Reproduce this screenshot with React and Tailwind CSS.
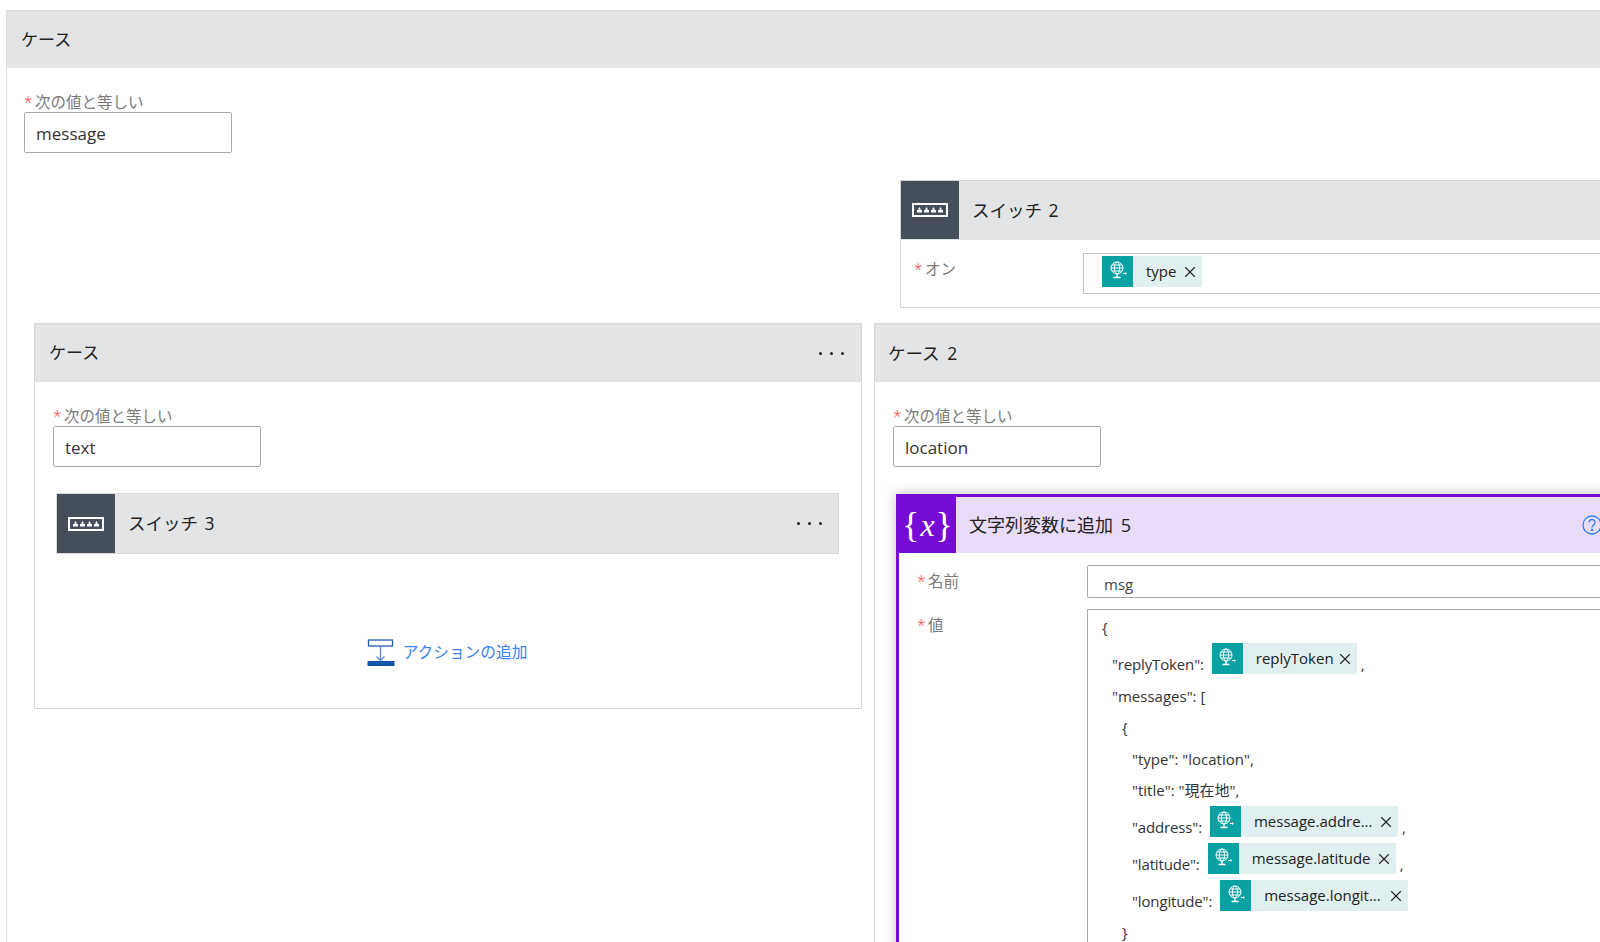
import { X } from "lucide-react";

function Globe() {
  return (
    <svg width="20" height="20" viewBox="0 0 20 20" fill="none" stroke="white" strokeWidth="1">
      <circle cx="9" cy="8" r="6" />
      <ellipse cx="9" cy="8" rx="2.6" ry="6" />
      <path d="M3 8h12M4 5h10M4 11h10" />
      <path d="M9 14v3M5.5 17.5h7" strokeWidth="1.4" />
      <path d="M15 13.5h3.5M17.2 12.5l1.3 1-1.3 1" />
    </svg>
  );
}

function SwitchIcon() {
  return (
    <svg width="36" height="14" viewBox="0 0 36 14" fill="none">
      <rect x="1" y="1" width="34" height="12" stroke="white" strokeWidth="2" fill="none" />
      {[5, 12, 19, 26].map((x) => (
        <path key={x} d="M1.5 3.5l1-1.5h0l1 1.5v1.5h1.5v2.5h-5v-2.5h1.5z" transform={`translate(${x} 2)`} fill="white" />
      ))}
    </svg>
  );
}

function Dots() {
  return (
    <div className="flex gap-[8px]">
      <span className="w-[3px] h-[3px] rounded-full bg-[#222]" />
      <span className="w-[3px] h-[3px] rounded-full bg-[#222]" />
      <span className="w-[3px] h-[3px] rounded-full bg-[#222]" />
    </div>
  );
}

function Token({ label, width }) {
  return (
    <div className={`flex h-[31px] shrink-0 bg-[#e0f0f0] ${width}`}>
      <div className="w-[31px] h-[31px] shrink-0 bg-[#0aa1a3] flex items-center justify-center pb-[3px]">
        <Globe />
      </div>
      <span className="ml-[13px] text-[15px] leading-[31px] text-[#222] whitespace-nowrap">{label}</span>
      <X size={18} strokeWidth={1.5} className="ml-auto mr-[3px] mt-[7px] text-[#222]" />
    </div>
  );
}

function Label({ children, className = "" }) {
  return (
    <div className={`flex text-[15.5px] leading-[20px] text-[#7a7a7a] ${className}`}>
      <span className="text-[#f33] w-[11px] shrink-0 font-light">*</span>
      {children}
    </div>
  );
}

function EqualsField({ value }) {
  return (
    <div>
      <Label>次の値と等しい</Label>
      <div className="w-[208px] h-[41px] border border-[#aaaaaa] rounded-[2px] bg-white px-[11px] text-[17px] leading-[41px] text-[#333]">
        {value}
      </div>
    </div>
  );
}

function CodeLine({ indent, text, token, tokenWidth, trail, height = "h-[31px]" }) {
  if (!token) {
    return <div className={`leading-[31px] whitespace-nowrap ${height} ${indent}`}>{text}</div>;
  }
  return (
    <div className={`flex whitespace-nowrap ${height} ${indent}`}>
      <span className="leading-[31px] mt-[6px] mr-[8px] tracking-[-0.01em]">{text}</span>
      <Token label={token} width={tokenWidth} />
      {trail && <span className="leading-[31px] mt-[6px] ml-[4px]">{trail}</span>}
    </div>
  );
}

export default function App() {
  return (
    <div className="w-[1600px] h-[942px] overflow-hidden bg-white font-['Open_Sans','Noto_Sans_CJK_JP',sans-serif] text-[#222]">
      <div className="ml-[6px] mt-[10px] w-[1700px] border-l border-t border-[#dcdcdc]">
        <div className="h-[57px] bg-[#e3e4e6] flex items-center pl-[14px] text-[17px]">ケース</div>

        <div className="pt-[24px] pl-[17px]">
          <EqualsField value="message" />
        </div>

        <div className="mt-[27px] ml-[893px] border border-[#d4d4d4] h-[128px]">
          <div className="flex h-[59px] bg-[#e3e4e6]">
            <div className="w-[58px] h-[58px] bg-[#454f5b] flex items-center justify-center">
              <SwitchIcon />
            </div>
            <div className="flex items-center pl-[13px] text-[17.5px] [word-spacing:2px]">スイッチ 2</div>
          </div>
          <div className="flex pt-[13px]">
            <Label className="w-[182px] pl-[13px] pt-[6px] shrink-0">オン</Label>
            <div className="flex-1 h-[41px] border border-[#c4c4c4] pl-[18px] pt-[2px]">
              <Token label="type" width="w-[100px]" />
            </div>
          </div>
        </div>

        <div className="flex mt-[15px] pl-[27px] gap-[12px] items-start">
          <div className="w-[828px] h-[386px] border border-[#d8d8d8] shrink-0">
            <div className="h-[58px] bg-[#e3e4e6] flex items-center justify-between pl-[14px] pr-[17px] text-[17px]">
              ケース
              <Dots />
            </div>
            <div className="pl-[18px] pt-[24px]">
              <EqualsField value="text" />
            </div>
            <div className="mt-[26px] ml-[21px] mr-[22px] h-[61px] border border-[#d8d8d8] bg-[#e3e4e6] flex items-center pr-[16px]">
              <div className="w-[58px] h-[59px] bg-[#454f5b] flex items-center justify-center shrink-0">
                <SwitchIcon />
              </div>
              <div className="pl-[13px] text-[17.5px] flex-1 [word-spacing:2px]">スイッチ 3</div>
              <Dots />
            </div>
            <div className="flex justify-center items-center mt-[85px] gap-[8px] pr-[2px]">
              <svg width="28" height="28" viewBox="0 0 28 28" fill="none">
                <rect x="1.5" y="1" width="24" height="6" fill="white" stroke="#1f5fa8" strokeWidth="1.3" />
                <path d="M13.5 7v14M9.5 17.5l4 4 4-4" stroke="#5a8fcf" strokeWidth="1.4" />
                <rect x="0.5" y="22" width="27" height="5" fill="#0f55a8" />
              </svg>
              <span className="text-[15.7px] text-[#3b82f6]">アクションの追加</span>
            </div>
          </div>

          <div className="w-[840px] shrink-0 border border-[#d8d8d8] h-[700px]">
            <div className="h-[58px] bg-[#e3e4e6] flex items-center pl-[13px] text-[17.5px] [word-spacing:3px]">ケース 2</div>
            <div className="pl-[18px] pt-[24px]">
              <EqualsField value="location" />
            </div>
            <div className="mt-[27px] ml-[21px] w-[720px] h-[500px] border-[3px] border-[#770bd6] shadow-[0_0_12px_rgba(0,0,0,0.25)] bg-white">
              <div className="flex h-[56px] bg-[#e9dcf8] items-center pr-[11px]">
                <div className="w-[57px] h-[56px] bg-[#770bd6] flex items-center justify-center text-white font-['Liberation_Serif',serif] shrink-0">
                  <span className="text-[36px] leading-none font-light">{"{"}</span>
                  <span className="italic text-[32px] leading-none mx-[1px]">x</span>
                  <span className="text-[36px] leading-none font-light">{"}"}</span>
                </div>
                <div className="pl-[13px] text-[18px] flex-1 [word-spacing:3px]">文字列変数に追加 5</div>
                <svg width="20" height="20" viewBox="0 0 20 20" fill="none" stroke="#2f80f0" strokeWidth="1.3">
                  <circle cx="10" cy="10" r="9" />
                  <path d="M7 7.5a3 3 0 1 1 4.5 2.6c-1 .6-1.5 1.2-1.5 2.4" />
                  <circle cx="10" cy="15" r="0.6" fill="#2f80f0" />
                </svg>
              </div>
              <div className="flex mt-[12px]">
                <Label className="w-[188px] pl-[18px] pt-[6px] shrink-0">名前</Label>
                <div className="flex-1 h-[33px] border border-[#aaaaaa] rounded-[2px] pl-[16px] text-[15px] leading-[36px] text-[#444]">
                  msg
                </div>
              </div>
              <div className="flex mt-[11px]">
                <Label className="w-[188px] pl-[18px] pt-[6px] shrink-0">値</Label>
                <div className="flex-1 h-[400px] border border-[#aaaaaa] pt-[2px] text-[15px] text-[#333]">
                  <CodeLine indent="pl-[14px]" text="{" />
                  <CodeLine indent="pl-[24px]" text={'"replyToken":'} token="replyToken" tokenWidth="w-[145px]" trail="," height="h-[38px]" />
                  <CodeLine indent="pl-[24px]" text={'"messages": ['} />
                  <CodeLine indent="pl-[34px]" text="{" height="h-[32px]" />
                  <CodeLine indent="pl-[44px]" text={'"type": "location",'} />
                  <CodeLine indent="pl-[44px]" text={'"title": "現在地",'} />
                  <CodeLine indent="pl-[44px]" text={'"address":'} token="message.addre..." tokenWidth="w-[188px]" trail="," height="h-[37px]" />
                  <CodeLine indent="pl-[44px]" text={'"latitude":'} token="message.latitude" tokenWidth="w-[188px]" trail="," height="h-[37px]" />
                  <CodeLine indent="pl-[44px]" text={'"longitude":'} token="message.longit..." tokenWidth="w-[188px]" height="h-[37px]" />
                  <CodeLine indent="pl-[34px]" text="}" />
                </div>
              </div>
            </div>
          </div>
        </div>
      </div>
    </div>
  );
}
